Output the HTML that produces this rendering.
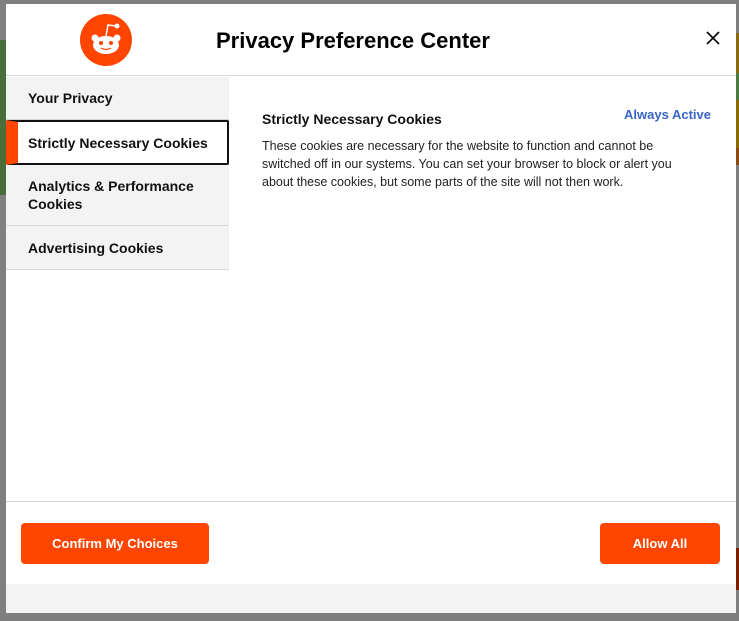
<!DOCTYPE html>
<html><head><style>
*{box-sizing:border-box;margin:0;padding:0}
body{width:739px;height:621px;background:#7f7f7f;position:relative;overflow:hidden;font-family:"Liberation Sans",sans-serif;color:#111}
.s{position:absolute}
.m{position:absolute;left:6px;top:4px;width:730px;height:609px;background:#fff}
.hd{position:absolute;left:0;top:0;width:730px;height:72px;border-bottom:1px solid #d8d8d8}
.title{position:absolute;left:210px;top:24px;font-size:22px;font-weight:bold;color:#000}
.nav{position:absolute;left:0;top:73px;width:223px;background:#f3f3f3}
.it{font-size:14px;font-weight:bold;padding:0 0 0 22px;border-bottom:1px solid #d8d8d8;display:flex;align-items:center;line-height:18px}
.act{background:#fff;border:2px solid #111;border-radius:2px;border-left:12px solid #ff4500;padding-left:10px}
.ct{position:absolute;left:256px;top:106px;width:449px}
.foot{position:absolute;left:0;top:497px;width:730px;border-top:1px solid #d8d8d8}
.btn{position:absolute;top:519px;height:41px;background:#ff4500;color:#fff;font-weight:bold;font-size:13px;border-radius:4px;display:flex;align-items:center;justify-content:center}
</style></head><body>
<div class="s" style="left:0;top:40px;width:6px;height:155px;background:#4a6e3a"></div>
<div class="s" style="left:736px;top:33px;width:3px;height:40px;background:#8a6a10"></div>
<div class="s" style="left:736px;top:73px;width:3px;height:27px;background:#4a7a40"></div>
<div class="s" style="left:736px;top:100px;width:3px;height:48px;background:#8a6a00"></div>
<div class="s" style="left:736px;top:148px;width:3px;height:17px;background:#8a4a10"></div>
<div class="s" style="left:736px;top:548px;width:3px;height:42px;background:#7a2000"></div>
<div class="m">
 <div class="hd">
  <svg class="s" style="left:74px;top:10px" width="52" height="52" viewBox="0 0 52 52">
   <circle cx="26" cy="26" r="26" fill="#ff4500"/>
   <ellipse cx="26" cy="31" rx="13" ry="9" fill="#fff"/>
   <circle cx="15" cy="24" r="3.5" fill="#fff"/><circle cx="37" cy="24" r="3.5" fill="#fff"/>
   <circle cx="37" cy="12" r="2.5" fill="#fff"/>
   <path d="M26 22 L28 11 L36 12" stroke="#fff" stroke-width="1.5" fill="none"/>
   <circle cx="21" cy="29" r="2" fill="#ff4500"/><circle cx="31" cy="29" r="2" fill="#ff4500"/>
   <path d="M21 34 Q26 37 31 34" stroke="#ff4500" stroke-width="1.3" fill="none"/>
  </svg>
  <div class="title">Privacy Preference Center</div>
  <svg class="s" style="left:700px;top:27px" width="14" height="14" viewBox="0 0 14 14"><path d="M1 1L13 13M13 1L1 13" stroke="#000" stroke-width="1.6"/></svg>
 </div>
 <div class="nav">
  <div class="it" style="height:43px">Your Privacy</div>
  <div class="it act" style="height:45px">Strictly Necessary Cookies</div>
  <div class="it" style="height:61px">Analytics &amp; Performance<br>Cookies</div>
  <div class="it" style="height:44px">Advertising Cookies</div>
 </div>
 <div class="ct">
  <div style="font-size:14px;font-weight:bold;margin-top:1px">Strictly Necessary Cookies</div>
  <div class="s" style="right:0;top:-3px;color:#3a64c8;font-size:13px;font-weight:bold">Always Active</div>
  <div style="font-size:12.5px;line-height:18px;margin-top:10px;color:#222;width:418px">These cookies are necessary for the website to function and cannot be switched off in our systems. You can set your browser to block or alert you about these cookies, but some parts of the site will not then work.</div>
 </div>
 <div class="foot"></div>
 <div class="btn" style="left:15px;width:188px">Confirm My Choices</div>
 <div class="btn" style="left:594px;width:120px">Allow All</div>
 <div class="s" style="left:0;top:580px;width:730px;height:29px;background:#f3f3f3"></div>
</div>
</body></html>
